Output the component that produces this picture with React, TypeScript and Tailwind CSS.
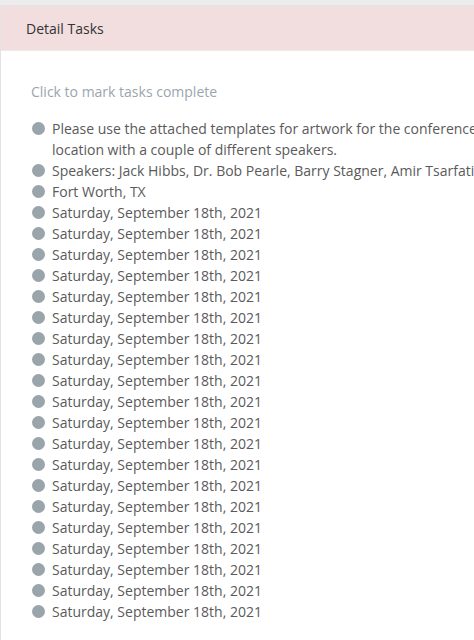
const tasks: string[] = [
  'Please use the attached templates for artwork for the conference location with a couple of different speakers.',
  'Speakers: Jack Hibbs, Dr. Bob Pearle, Barry Stagner, Amir Tsarfati',
  'Fort Worth, TX',
  ...Array.from({ length: 20 }, () => 'Saturday, September 18th, 2021'),
]

export default function App() {
  return (
    <div
      className="h-[640px] w-[474px] overflow-hidden bg-[#ececec] pt-[5px]"
      style={{ fontFamily: '"Open Sans", sans-serif' }}
    >
      <div className="w-[560px] border border-[#e3e3e3] bg-white">
        {/* Header */}
        <div className="flex h-[45px] items-center border-b border-[#ebebeb] bg-[#f2dede] px-[25px] text-[14px] text-[#333]">
          Detail Tasks
        </div>

        {/* Body */}
        <div className="px-[30px] pb-6 pt-[30px]">
          <p className="text-[14px] leading-[21px] text-[#9aa5ae]">Click to mark tasks complete</p>
          <ul className="mt-[16px] flex flex-col">
            {tasks.map((t, i) => (
              <li key={i} className="flex items-start gap-[8px] pl-px text-[14px] leading-[21px] text-[#5a5a5a]">
                <span className="mt-[4px] h-[13px] w-[13px] shrink-0 rounded-full bg-[#99a4ab]" />
                <span className="w-[450px] -ml-px">{t}</span>
              </li>
            ))}
          </ul>
        </div>
      </div>
    </div>
  )
}
